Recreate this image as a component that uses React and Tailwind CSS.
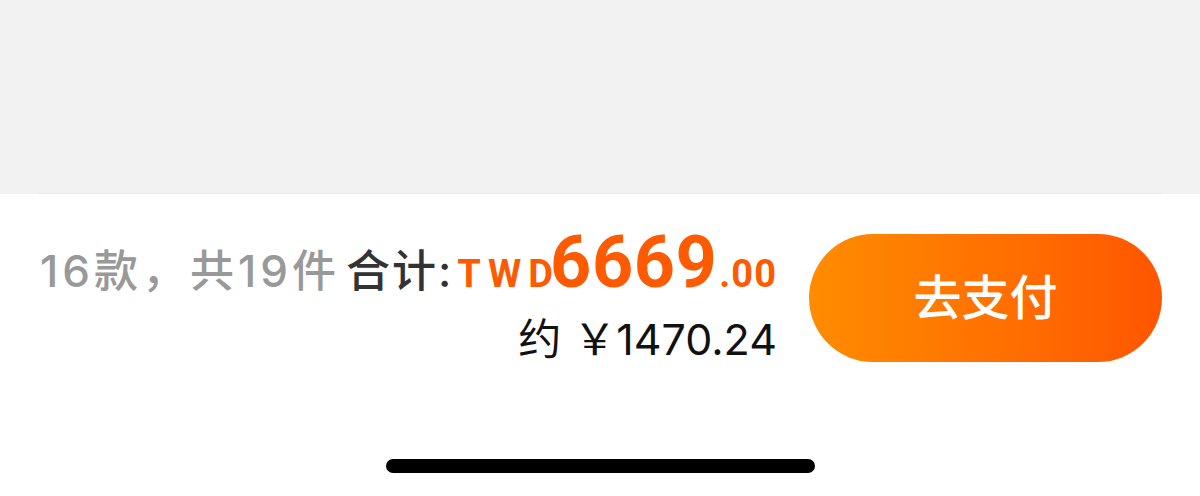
const sans = "font-['Inter','Noto_Sans_CJK_SC',sans-serif]";
const num = "font-['Roboto','Liberation_Sans',sans-serif]";

export default function App() {
  return (
    <div className="w-[1200px] h-[496px] bg-white flex flex-col overflow-hidden">
      {/* list area above the checkout bar */}
      <div className="h-[194px] bg-[#f2f2f2] flex flex-col justify-end">
        <div className="mx-[38px] h-px bg-[#e9e9e9]" />
      </div>

      {/* checkout bar */}
      <div className="flex items-start pl-[40px] pr-[38px] mt-[33px]">
        <div className={`flex flex-col items-end ${sans}`}>
          <div className="flex items-baseline h-[62px]">
            <span className="text-[44px] leading-none font-medium text-[#999] tracking-[4px]">
              16款，共19件
            </span>
            <span className="ml-[6px] text-[44px] leading-none font-medium text-[#333] tracking-[2px]">合计:</span>
            <span className={`${num} ml-[4px] -mr-[10px] text-[38px] leading-none font-bold text-[#fe5a00] tracking-[7px]`}>TWD</span>
            <span className={`${num} text-[72px] leading-none font-bold text-[#fe5a00] tracking-[0.5px]`}>6669</span>
            <span className={`${num} ml-[2px] text-[38px] leading-none font-bold text-[#fe5a00] tracking-[1px]`}>.00</span>
          </div>
          <div className="mt-[29px] text-[43px] leading-none text-[#111]">约 ￥1470.24</div>
        </div>

        <button
          className={`ml-auto mt-[7px] w-[353px] h-[128px] rounded-full bg-gradient-to-r from-[#ff8c00] to-[#ff5500] text-white text-[48px] font-medium ${sans}`}
        >
          去支付
        </button>
      </div>

      {/* home indicator */}
      <div className="mt-auto mb-[23px] mx-auto w-[429px] h-[14px] rounded-full bg-black" />
    </div>
  );
}
